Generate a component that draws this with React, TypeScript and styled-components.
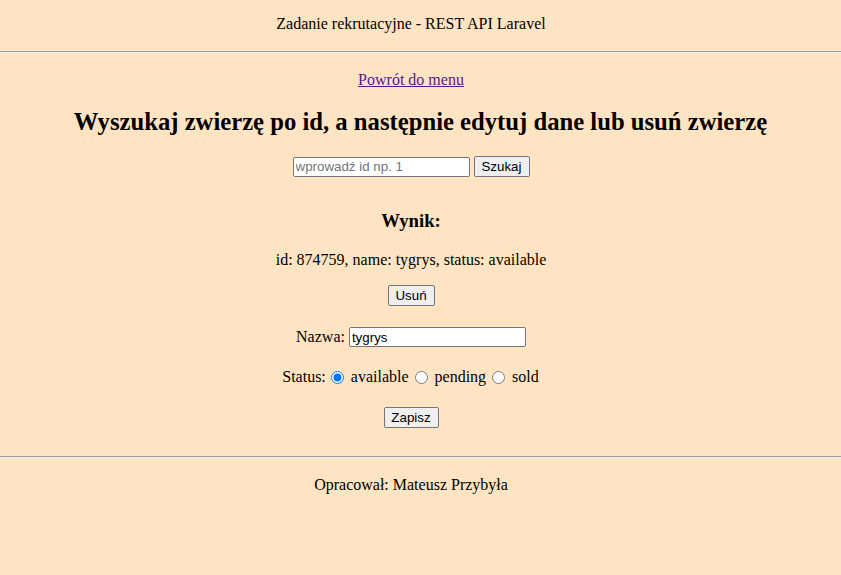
import React from "react";
import styled, { createGlobalStyle } from "styled-components";

const Global = createGlobalStyle`
  html, body { margin: 0; padding: 0; background: #ffe4c4; }
  body { font-family: "Liberation Serif", "Times New Roman", serif; font-size: 16px; color: #000; }
`;

const Page = styled.div`
  display: flex;
  flex-direction: column;
  min-height: 575px;
  background: #ffe4c4;
`;

const Header = styled.header`
  padding: 15px 19px 18px 0;
  text-align: center;
  line-height: 18px;
`;

const Rule = styled.hr`
  margin: 0;
  height: 0;
  border: none;
  border-top: 1px solid #9a9a9a;
  border-bottom: 1px solid #eeeeee;
`;

const Main = styled.main`
  display: flex;
  flex-direction: column;
  align-items: center;
  padding: 18px 19px 28px 0;
`;

const MenuLink = styled.a`
  color: #551a8b;
  text-decoration: underline;
  line-height: 18px;
`;

const Title = styled.h2`
  margin: 19px -19px 0 0;
  font-size: 24.68px;
  line-height: 28px;
  font-weight: bold;
`;

const Row = styled.div<{ $gap: number }>`
  display: block;
  text-align: center;
  margin-top: ${(p) => p.$gap}px;
  line-height: 18px;
  white-space: nowrap;
`;

const Inline = styled.div`
  display: inline-flex;
  align-items: center;
`;

const TextInput = styled.input`
  box-sizing: border-box;
  width: 177px;
  height: 20px;
  padding: 1px 2px;
  border: 1px solid #767676;
  border-radius: 2px;
  background: #fff;
  font-family: "Liberation Sans", Arial, sans-serif;
  font-size: 13.33px;
  color: #000;
  &::placeholder { color: #757575; }
`;

const Button = styled.button<{ $w: number; $ml?: number }>`
  box-sizing: border-box;
  width: ${(p) => p.$w}px;
  height: 21px;
  margin-left: ${(p) => p.$ml ?? 0}px;
  padding: 1px 6px;
  border: 1px solid #767676;
  border-radius: 2px;
  background: #efefef;
  font-family: "Liberation Sans", Arial, sans-serif;
  font-size: 13.33px;
  color: #000;
`;

const SubTitle = styled.h3`
  margin: 33px 0 0;
  font-size: 18.72px;
  line-height: 22px;
  font-weight: bold;
`;

const Result = styled.p`
  margin: 19px 0 0;
  line-height: 18px;
`;

const Label = styled.label`
  margin-right: 4px;
`;

const Radio = styled.input`
  width: 13px;
  height: 13px;
  margin: 0 7px 0 5px;
  accent-color: #0075ff;
`;

const Option = styled.span`
  margin-right: 1px;
`;

const Footer = styled.footer`
  padding: 18px 19px 0 0;
  text-align: center;
  line-height: 18px;
`;

export default function App() {
  return (
    <Page>
      <Global />
      <Header>Zadanie rekrutacyjne - REST API Laravel</Header>
      <Rule />
      <Main>
        <MenuLink href="#">Powrót do menu</MenuLink>
        <Title>Wyszukaj zwierzę po id, a następnie edytuj dane lub usuń zwierzę</Title>
        <Row $gap={20}>
          <Inline>
            <TextInput placeholder="wprowadź id np. 1" />
            <Button $w={56} $ml={4}>Szukaj</Button>
          </Inline>
        </Row>
        <SubTitle>Wynik:</SubTitle>
        <Result>id: 874759, name: tygrys, status: available</Result>
        <Row $gap={16}>
          <Inline>
            <Button $w={47}>Usuń</Button>
          </Inline>
        </Row>
        <Row $gap={21}>
          <Inline>
            <Label>Nazwa:</Label>
            <TextInput defaultValue="tygrys" />
          </Inline>
        </Row>
        <Row $gap={21}>
          <Inline>
            <span>Status:</span>
            <Radio type="radio" name="status" defaultChecked />
            <Option>available</Option>
            <Radio type="radio" name="status" />
            <Option>pending</Option>
            <Radio type="radio" name="status" />
            <Option>sold</Option>
          </Inline>
        </Row>
        <Row $gap={21}>
          <Inline>
            <Button $w={55}>Zapisz</Button>
          </Inline>
        </Row>
      </Main>
      <Rule />
      <Footer>Opracował: Mateusz Przybyła</Footer>
    </Page>
  );
}
